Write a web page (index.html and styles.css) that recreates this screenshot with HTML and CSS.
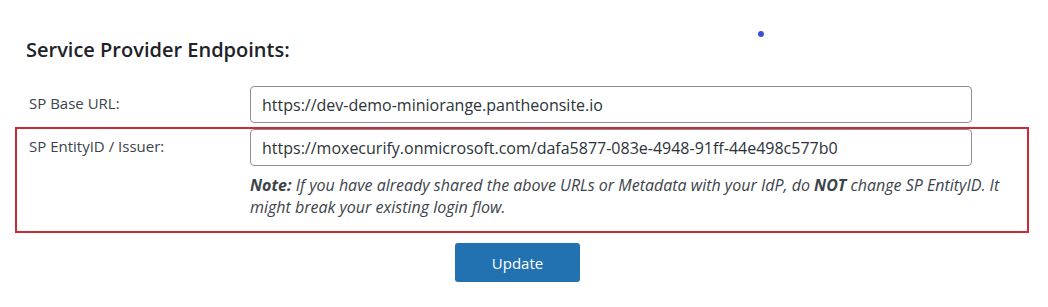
FILE: index.html
```html
<!DOCTYPE html>
<html lang="en">
<head>
  <meta charset="UTF-8" />
  <title>Service Provider Endpoints</title>
  <link rel="stylesheet" href="styles.css">
</head>
<body>
  <span class="dot"></span>
  <div class="wrap">
    <h3>Service Provider Endpoints:</h3>

    <div class="row">
      <label for="baseUrl">SP Base URL:</label>
      <div class="field">
        <input type="text" id="baseUrl" value="https://dev-demo-miniorange.pantheonsite.io" />
      </div>
    </div>

    <div class="row marked">
      <label for="entityId">SP EntityID / Issuer:</label>
      <div class="field">
        <input type="text" id="entityId" value="https://moxecurify.onmicrosoft.com/dafa5877-083e-4948-91ff-44e498c577b0" />
        <p class="note"><b>Note:</b> If you have already shared the above URLs or Metadata with your IdP, do <b>NOT</b> change SP EntityID. It might break your existing login flow.</p>
      </div>
    </div>

    <div class="actions">
      <button type="button">Update</button>
    </div>
  </div>
</body>
</html>
```

FILE: styles.css
```css
* { box-sizing: border-box; margin: 0; padding: 0; }
body { font-family: "Open Sans", "Noto Sans", sans-serif; background: #fff; color: #3c434a; position: relative; }
.wrap { padding: 0 19px 0 15px; }
h3 { font-size: 20px; font-weight: 600; color: #1d2327; padding: 37px 0 0 11px; line-height: 26px; height: 84px; }
.row { display: flex; border: 2px solid transparent; padding-left: 12px; }
.row + .row { margin-top: 2px; }
.row.marked { border-color: #cc2a36; padding-bottom: 13px; }
label { width: 221px; flex: none; font-size: 15px; line-height: 20px; padding-top: 7px; color: #3c434a; }
.field { width: 722px; }
input[type="text"] {
  width: 722px; height: 37px; font-family: inherit; font-size: 16px; color: #2c3338;
  padding: 0 11px; border: 1px solid #8c8f94; border-radius: 4px; background: #fff;
}
.note { font-size: 16px; font-style: italic; line-height: 22px; margin-top: 8px; width: 762px; color: #3c434a; }
.note b { font-weight: 700; }
.actions { display: flex; justify-content: center; padding: 10px 9px 0 0; }
.actions button {
  width: 125px; height: 39px; border: none; border-radius: 3px; background: #2271b1; color: #fff;
  font-family: inherit; font-size: 15px; cursor: pointer;
}
.dot { position: absolute; left: 758px; top: 31px; width: 6px; height: 6px; border-radius: 50%; background: #3b4fd6; }
```
